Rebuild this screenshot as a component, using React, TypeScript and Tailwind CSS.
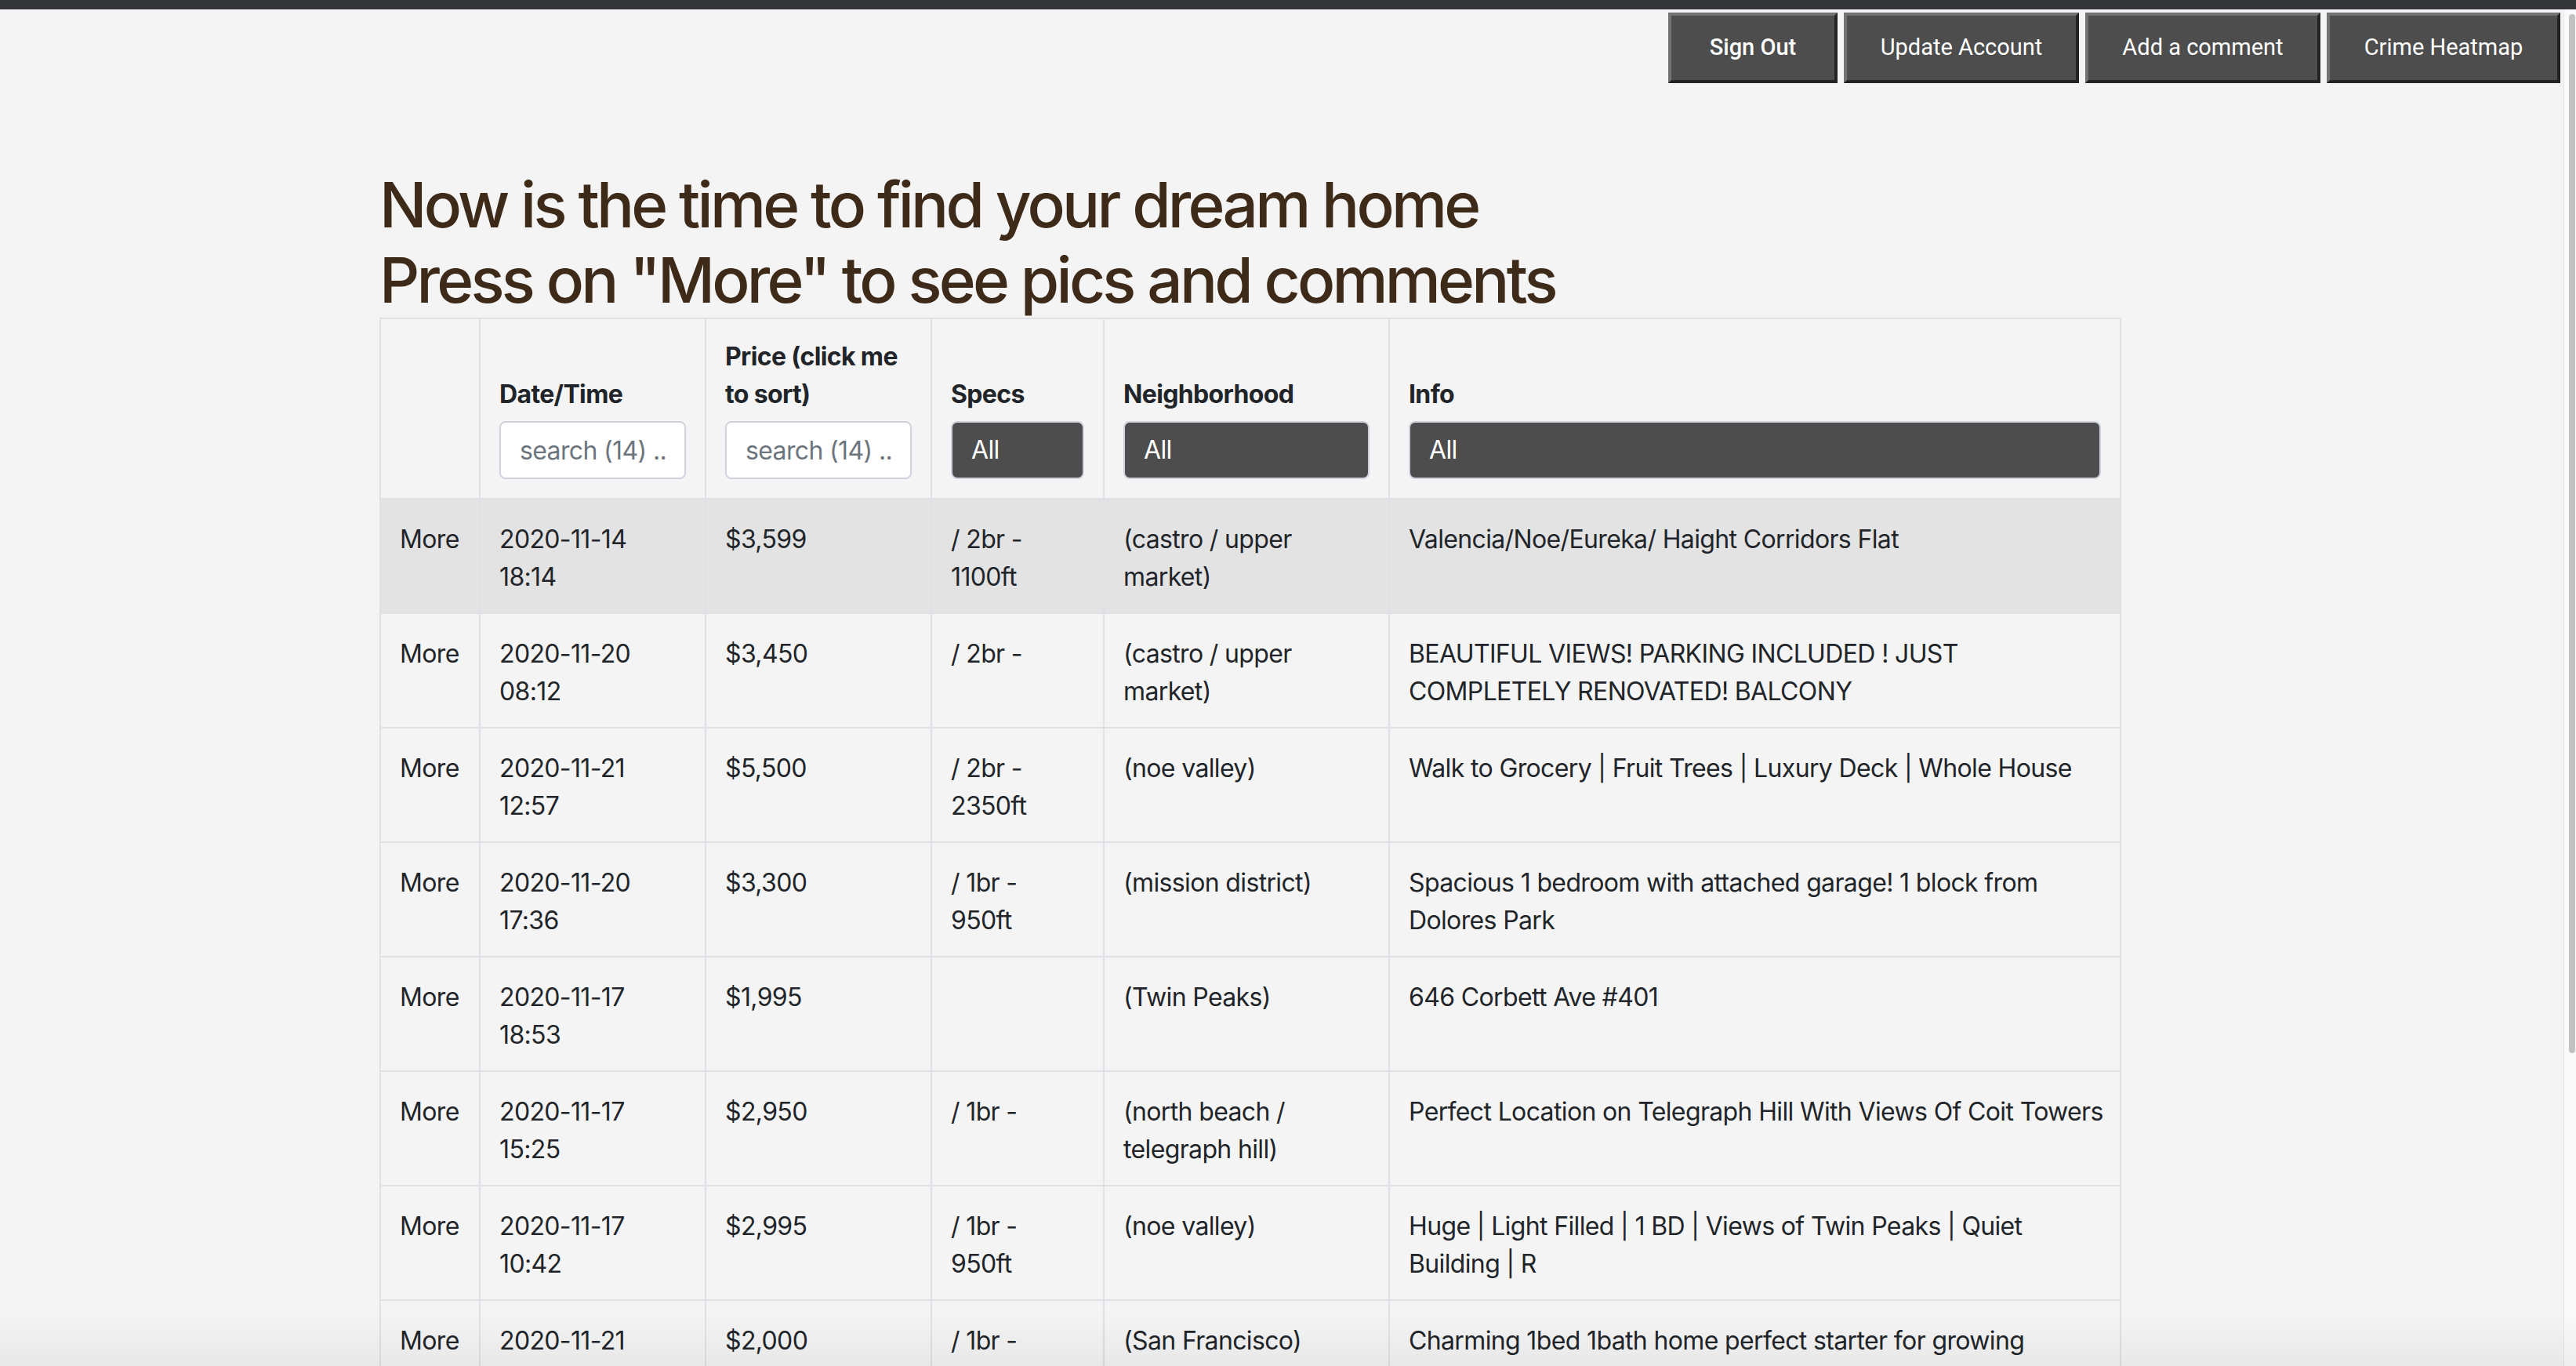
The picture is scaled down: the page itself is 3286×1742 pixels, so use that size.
import React from "react";

type Listing = {
  date: string;
  time: string;
  price: string;
  specs: string[];
  hood: string[];
  info: string[];
  active?: boolean;
};

const listings: Listing[] = [
  {
    date: "2020-11-14",
    time: "18:14",
    price: "$3,599",
    specs: ["/ 2br -", "1100ft"],
    hood: ["(castro / upper", "market)"],
    info: ["Valencia/Noe/Eureka/ Haight Corridors Flat"],
    active: true,
  },
  {
    date: "2020-11-20",
    time: "08:12",
    price: "$3,450",
    specs: ["/ 2br -"],
    hood: ["(castro / upper", "market)"],
    info: ["BEAUTIFUL VIEWS! PARKING INCLUDED ! JUST", "COMPLETELY RENOVATED! BALCONY"],
  },
  {
    date: "2020-11-21",
    time: "12:57",
    price: "$5,500",
    specs: ["/ 2br -", "2350ft"],
    hood: ["(noe valley)"],
    info: ["Walk to Grocery | Fruit Trees | Luxury Deck | Whole House"],
  },
  {
    date: "2020-11-20",
    time: "17:36",
    price: "$3,300",
    specs: ["/ 1br -", "950ft"],
    hood: ["(mission district)"],
    info: ["Spacious 1 bedroom with attached garage! 1 block from", "Dolores Park"],
  },
  {
    date: "2020-11-17",
    time: "18:53",
    price: "$1,995",
    specs: [],
    hood: ["(Twin Peaks)"],
    info: ["646 Corbett Ave #401"],
  },
  {
    date: "2020-11-17",
    time: "15:25",
    price: "$2,950",
    specs: ["/ 1br -"],
    hood: ["(north beach /", "telegraph hill)"],
    info: ["Perfect Location on Telegraph Hill With Views Of Coit Towers"],
  },
  {
    date: "2020-11-17",
    time: "10:42",
    price: "$2,995",
    specs: ["/ 1br -", "950ft"],
    hood: ["(noe valley)"],
    info: ["Huge | Light Filled | 1 BD | Views of Twin Peaks | Quiet", "Building | R"],
  },
  {
    date: "2020-11-21",
    time: "09:05",
    price: "$2,000",
    specs: ["/ 1br -", "600ft"],
    hood: ["(San Francisco)"],
    info: ["Charming 1bed 1bath home perfect starter for growing", "family"],
  },
];

const Lines = ({ lines }: { lines: string[] }) => (
  <>
    {lines.map((l, i) => (
      <div key={i} className="whitespace-nowrap">
        {l}
      </div>
    ))}
  </>
);

const NavButton = ({ label, width, strong }: { label: string; width: string; strong?: boolean }) => (
  <button
    className={`${width} h-[90px] border-4 border-t-[#727272] border-l-[#727272] border-r-[#232323] border-b-[#232323] bg-[#4d4d4d] text-white text-[29px] ${strong ? "font-medium" : "font-normal"}`}
    style={{ fontFamily: "Roboto, 'Liberation Sans', sans-serif" }}
  >
    {label}
  </button>
);

const SearchBox = () => (
  <input
    placeholder="search (14) .."
    className="mt-[10px] block w-full h-[74px] rounded-[8px] border-2 border-[#ced4da] bg-white px-[24px] text-[32px] font-normal text-[#495057] placeholder:text-[#6c757d] outline-none"
  />
);

const DarkSelect = () => (
  <div className="mt-[10px] flex items-center w-full h-[74px] rounded-[8px] border-2 border-[#ced4da] bg-[#4d4d4d] px-[24px] text-[32px] font-normal text-white">
    All
  </div>
);

const cell = "border-2 border-[#dee2e6] px-[24px] pt-[27px] pb-[21px] align-top";
const head = "border-2 border-[#dee2e6] p-[24px] align-bottom text-left font-bold";

export default function App() {
  return (
    <div
      className="relative h-screen w-full overflow-hidden bg-[#f4f4f4] text-[#212529]"
      style={{ fontFamily: "Inter, 'Noto Sans', sans-serif" }}
    >
      <div className="h-[12px] bg-[#333539]" />

      <div className="mr-[16px] mt-[4px] flex justify-end gap-[8px] pr-[4px]">
        <NavButton label="Sign Out" width="w-[216px]" strong />
        <NavButton label="Update Account" width="w-[300px]" />
        <NavButton label="Add a comment" width="w-[300px]" />
        <NavButton label="Crime Heatmap" width="w-[298px]" />
      </div>

      <div className="pl-[484px] pt-[107px]">
        <h1 className="text-[80px] leading-[96px] font-medium tracking-[-0.047em] text-[#3d2a18]">
          Now is the time to find your dream home
          <br />
          Press on "More" to see pics and comments
        </h1>

        <table className="w-[2220px] table-fixed border-collapse text-[32px] leading-[48px] tracking-[-0.02em]">
          <colgroup>
            <col className="w-[127px]" />
            <col className="w-[288px]" />
            <col className="w-[288px]" />
            <col className="w-[220px]" />
            <col className="w-[364px]" />
            <col className="w-[933px]" />
          </colgroup>
          <thead>
            <tr>
              <th className={head}></th>
              <th className={head}>
                Date/Time
                <SearchBox />
              </th>
              <th className={head}>
                Price (click me
                <br />
                to sort)
                <SearchBox />
              </th>
              <th className={head}>
                Specs
                <DarkSelect />
              </th>
              <th className={head}>
                Neighborhood
                <DarkSelect />
              </th>
              <th className={head}>
                Info
                <DarkSelect />
              </th>
            </tr>
          </thead>
          <tbody>
            {listings.map((l, i) => (
              <tr key={i} className={l.active ? "bg-[#e3e3e4]" : ""}>
                <td className={cell}>More</td>
                <td className={cell}>
                  <div>{l.date}</div>
                  <div>{l.time}</div>
                </td>
                <td className={cell}>{l.price}</td>
                <td className={cell}>
                  <Lines lines={l.specs} />
                </td>
                <td className={cell}>
                  <Lines lines={l.hood} />
                </td>
                <td className={cell}>
                  <Lines lines={l.info} />
                </td>
              </tr>
            ))}
          </tbody>
        </table>
      </div>

      {/* scrollbar */}
      <div className="absolute right-0 top-[12px] bottom-0 w-[16px] border-l border-[#e6e6e6] bg-[#fafafa]">
        <div className="ml-[6px] mt-[6px] h-[1325px] w-[8px] rounded-full bg-[#c1c1c1]" />
      </div>

      {/* window shadow at bottom */}
      <div className="pointer-events-none absolute inset-x-0 bottom-0 h-[70px] bg-gradient-to-b from-transparent to-black/[0.05]" />
    </div>
  );
}
